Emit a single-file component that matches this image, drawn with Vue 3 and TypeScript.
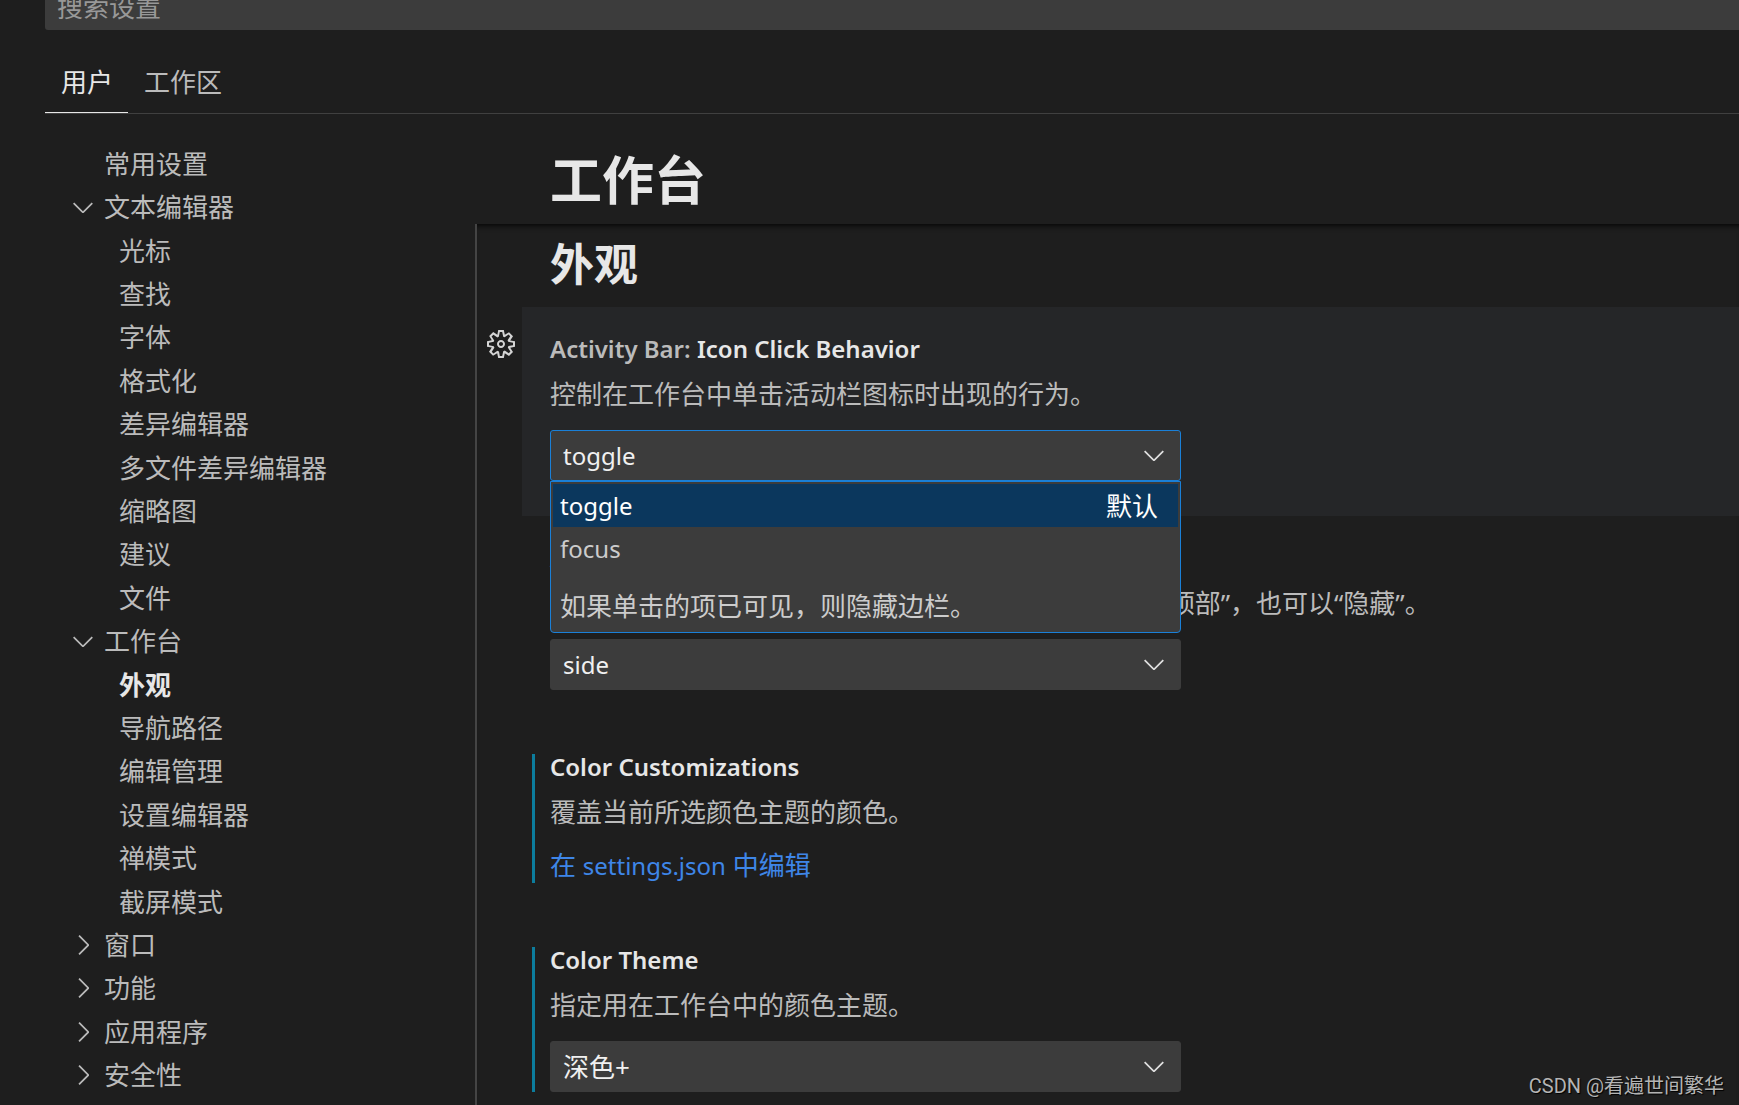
<script setup lang="ts">
import { ref } from 'vue'

interface TocEntry {
  label: string
  level: 0 | 1
  state?: 'open' | 'closed'
  active?: boolean
}

const toc: TocEntry[] = [
  { label: '常用设置', level: 0 },
  { label: '文本编辑器', level: 0, state: 'open' },
  { label: '光标', level: 1 },
  { label: '查找', level: 1 },
  { label: '字体', level: 1 },
  { label: '格式化', level: 1 },
  { label: '差异编辑器', level: 1 },
  { label: '多文件差异编辑器', level: 1 },
  { label: '缩略图', level: 1 },
  { label: '建议', level: 1 },
  { label: '文件', level: 1 },
  { label: '工作台', level: 0, state: 'open' },
  { label: '外观', level: 1, active: true },
  { label: '导航路径', level: 1 },
  { label: '编辑管理', level: 1 },
  { label: '设置编辑器', level: 1 },
  { label: '禅模式', level: 1 },
  { label: '截屏模式', level: 1 },
  { label: '窗口', level: 0, state: 'closed' },
  { label: '功能', level: 0, state: 'closed' },
  { label: '应用程序', level: 0, state: 'closed' },
  { label: '安全性', level: 0, state: 'closed' },
]

const chevronDown =
  'M7.976 10.072l4.357-4.357.62.618L8.284 11h-.618L3 6.333l.619-.618 4.357 4.357z'
const chevronRight =
  'M10.072 8.024L5.715 3.667l.618-.62L11 7.716v.618L6.333 13l-.618-.619 4.357-4.357z'

const query = ref('')
const iconClick = ref('toggle')
const location = ref('side')
const theme = ref('dark-plus')
</script>

<template>
  <div class="settings">
    <header class="header">
      <input v-model="query" class="search" type="text" placeholder="搜索设置" aria-label="搜索设置" />
      <nav class="tabs">
        <button type="button" class="tab tab-active">用户</button>
        <button type="button" class="tab">工作区</button>
      </nav>
    </header>

    <div class="body">
      <nav class="toc">
        <ul class="toc-list">
          <li v-for="entry in toc" :key="entry.label">
            <button
              type="button"
              class="toc-row"
              :class="{ 'toc-child': entry.level === 1, 'toc-active': entry.active }"
            >
              <svg v-if="entry.level === 0" class="icon" viewBox="0 0 16 16" aria-hidden="true">
                <path v-if="entry.state" :d="entry.state === 'open' ? chevronDown : chevronRight" />
              </svg>
              <span>{{ entry.label }}</span>
            </button>
          </li>
        </ul>
      </nav>

      <main class="main">
        <h1 class="title">工作台</h1>
        <div class="list">
          <h2 class="section">外观</h2>

          <section class="item">
            <div class="gutter">
              <button type="button" class="gear" aria-label="更多操作">
                <svg class="icon" viewBox="0 0 16 16" aria-hidden="true">
                  <path
                    fill-rule="evenodd"
                    d="M9.1 4.4L8.6 2H7.4l-.5 2.4-.7.3-2-1.3-.9.8 1.3 2-.2.7-2.4.5v1.2l2.4.5.3.8-1.3 2 .8.8 2-1.3.8.3.4 2.3h1.2l.5-2.4.8-.3 2 1.3.8-.8-1.3-2 .3-.8 2.3-.4V7.4l-2.4-.5-.3-.8 1.3-2-.8-.8-2 1.3-.7-.2zM9.4 1l.5 2.4L12 2.1l2 2-1.4 2.1 2.4.4v2.8l-2.4.5L14 12l-2 2-2.1-1.4-.5 2.4H6.6l-.5-2.4L4 13.9l-2-2 1.4-2.1L1 9.4V6.6l2.4-.5L2.1 4l2-2 2.1 1.4.4-2.4h2.8zm.6 7c0 1.1-.9 2-2 2s-2-.9-2-2 .9-2 2-2 2 .9 2 2zM8 9c.6 0 1-.4 1-1s-.4-1-1-1-1 .4-1 1 .4 1 1 1z"
                  />
                </svg>
              </button>
            </div>
            <div class="item-body item-focused">
              <div class="content">
                <label class="name" for="icon-click">
                  <span class="category">Activity Bar:</span> Icon Click Behavior
                </label>
                <p class="desc">控制在工作台中单击活动栏图标时出现的行为。</p>
                <div class="picker">
                  <select id="icon-click" v-model="iconClick" class="select select-open latin">
                    <option value="toggle">toggle</option>
                    <option value="focus">focus</option>
                  </select>
                  <svg class="icon picker-icon" viewBox="0 0 16 16" aria-hidden="true">
                    <path :d="chevronDown" />
                  </svg>
                  <div class="menu">
                    <ul class="options" role="listbox" aria-label="Icon Click Behavior">
                      <li class="option option-selected" role="option" aria-selected="true">
                        <span class="latin">toggle</span>
                        <span>默认</span>
                      </li>
                      <li class="option" role="option" aria-selected="false">
                        <span class="latin">focus</span>
                      </li>
                    </ul>
                    <p class="hint">如果单击的项已可见，则隐藏边栏。</p>
                  </div>
                </div>
              </div>
            </div>
          </section>

          <section class="item">
            <div class="gutter"></div>
            <div class="item-body">
              <div class="content">
                <label class="name" for="location">
                  <span class="category">Activity Bar:</span> Location
                </label>
                <p class="desc">控制活动栏的位置。它可以显示在“主侧栏”的“侧面”或“顶部”，也可以“隐藏”。</p>
                <div class="picker">
                  <select id="location" v-model="location" class="select latin">
                    <option value="side">side</option>
                    <option value="top">top</option>
                    <option value="hidden">hidden</option>
                  </select>
                  <svg class="icon picker-icon" viewBox="0 0 16 16" aria-hidden="true">
                    <path :d="chevronDown" />
                  </svg>
                </div>
              </div>
            </div>
          </section>

          <section class="item">
            <div class="gutter"></div>
            <div class="item-body">
              <div class="content content-modified">
                <h3 class="name">Color Customizations</h3>
                <p class="desc">覆盖当前所选颜色主题的颜色。</p>
                <a class="link" href="#settings-json">在 <span class="latin">settings.json</span> 中编辑</a>
              </div>
            </div>
          </section>

          <section class="item">
            <div class="gutter"></div>
            <div class="item-body">
              <div class="content content-modified">
                <label class="name" for="theme">Color Theme</label>
                <p class="desc">指定用在工作台中的颜色主题。</p>
                <div class="picker">
                  <select id="theme" v-model="theme" class="select">
                    <option value="dark-plus">深色+</option>
                    <option value="light-plus">浅色+</option>
                  </select>
                  <svg class="icon picker-icon" viewBox="0 0 16 16" aria-hidden="true">
                    <path :d="chevronDown" />
                  </svg>
                </div>
              </div>
            </div>
          </section>
        </div>
      </main>
    </div>

    <div class="watermark">CSDN @看遍世间繁华</div>
  </div>
</template>

<style>
body {
  margin: 0;
  background: #1e1e1e;
}
</style>

<style scoped>
.settings {
  position: relative;
  display: flex;
  flex-direction: column;
  box-sizing: border-box;
  min-height: 100vh;
  padding-left: 45px;
  overflow: hidden;
  background: #1e1e1e;
  color: #bbbbbb;
  font-family: 'Noto Sans', 'Noto Sans CJK SC', sans-serif;
  font-size: 26px;
  line-height: 34px;
}

.settings *,
.settings *::before {
  box-sizing: border-box;
}

button,
input,
select {
  margin: 0;
  border: 0;
  font: inherit;
  color: inherit;
}

button {
  padding: 0;
  background: none;
  cursor: pointer;
}

h1,
h2,
h3,
p,
ul {
  margin: 0;
  padding: 0;
}

ul {
  list-style: none;
}

.latin {
  font-size: 24px;
}

.icon {
  display: block;
  flex: none;
  width: 32px;
  height: 32px;
  fill: currentColor;
}

/* Search box, scrolled partly out of view, and scope tabs */
.search {
  display: block;
  width: 100%;
  height: 46px;
  margin-top: -16px;
  padding: 0 12px;
  border-radius: 3px 0 0 3px;
  background: #3c3c3c;
  color: #cccccc;
  outline: none;
}

.search::placeholder {
  color: #989898;
  opacity: 1;
}

.tabs {
  display: flex;
  padding-top: 22px;
  border-bottom: 1px solid #404040;
}

.tab {
  height: 61px;
  padding: 0 15px 0 16px;
  border-bottom: 1px solid transparent;
}

.tab-active {
  border-bottom-color: #e7e7e7;
  color: #e7e7e7;
}

.body {
  display: flex;
  flex: 1;
}

/* Table of contents */
.toc {
  display: flex;
  flex: 0 0 430px;
  padding: 28px 0 8px 22px;
}

.toc-list {
  display: grid;
  flex: 1;
  grid-auto-rows: 1fr;
}

.toc-list li {
  display: flex;
}

.toc-row {
  display: flex;
  flex: 1;
  align-items: center;
  gap: 5px;
  text-align: left;
}

.toc-child {
  padding-left: 52px;
}

.toc-active {
  color: #e7e7e7;
  font-weight: 700;
}

/* Settings list */
.main {
  display: flex;
  flex: 1;
  flex-direction: column;
  min-width: 0;
}

.title {
  height: 110px;
  padding: 34px 0 0 75px;
  color: #e7e7e7;
  font-size: 52px;
  line-height: 64px;
}

.list {
  flex: 1;
  border-left: 2px solid #444444;
  box-shadow: inset 0 6px 6px -5px #000000;
}

.section {
  height: 83px;
  padding: 13px 0 0 73px;
  color: #e7e7e7;
  font-size: 44px;
  line-height: 54px;
}

.item {
  display: flex;
}

.gutter {
  display: flex;
  flex: 0 0 45px;
  align-items: flex-start;
  padding: 21px 0 0 8px;
}

.gear {
  color: #d4d4d4;
}

.item-body {
  flex: 1;
  min-width: 0;
  padding: 29px 24px 35px 10px;
}

.item:last-child .item-body {
  padding-bottom: 8px;
}

.item-focused {
  background: #252628;
}

.content {
  padding-left: 15px;
  border-left: 3px solid transparent;
}

.content-modified {
  border-left-color: #0c7d9d;
}

.name {
  display: block;
  color: #e7e7e7;
  font-size: 24px;
  font-weight: 600;
  line-height: 26px;
}

.category {
  color: #bbbbbb;
}

.desc {
  margin: 15px 0 19px;
  white-space: nowrap;
}

.link {
  display: block;
  color: #3e86e8;
  line-height: 34px;
  text-decoration: none;
}

.picker {
  position: relative;
  display: grid;
  align-items: center;
  max-width: 631px;
}

.select {
  grid-area: 1 / 1;
  width: 100%;
  height: 51px;
  padding: 0 48px 0 12px;
  border: 1px solid #3c3c3c;
  border-radius: 3px;
  outline: none;
  appearance: none;
  background: #3c3c3c;
  color: #f0f0f0;
}

.select-open {
  border-color: #1a80d8;
}

.picker-icon {
  grid-area: 1 / 1;
  justify-self: end;
  margin: 0 11px 2px 0;
  color: #e0e0e0;
  pointer-events: none;
}

.menu {
  position: absolute;
  z-index: 2;
  top: 100%;
  left: 0;
  right: 0;
  border: 1px solid #1a80d8;
  border-radius: 0 0 4px 4px;
  background: #3c3c3c;
  color: #cccccc;
}

.options {
  padding: 2px;
}

.option {
  display: flex;
  align-items: center;
  justify-content: space-between;
  height: 43px;
  padding: 0 20px 0 7px;
}

.option-selected {
  background: #0b375d;
  color: #ffffff;
}

.hint {
  padding: 17px 9px 9px;
}

.watermark {
  position: absolute;
  right: 15px;
  bottom: 6px;
  color: #b4b4b4;
  font-family: Roboto, 'Noto Sans CJK SC', sans-serif;
  font-size: 20px;
  line-height: 26px;
  text-shadow: 1px 1px 1px #000000;
}
</style>
